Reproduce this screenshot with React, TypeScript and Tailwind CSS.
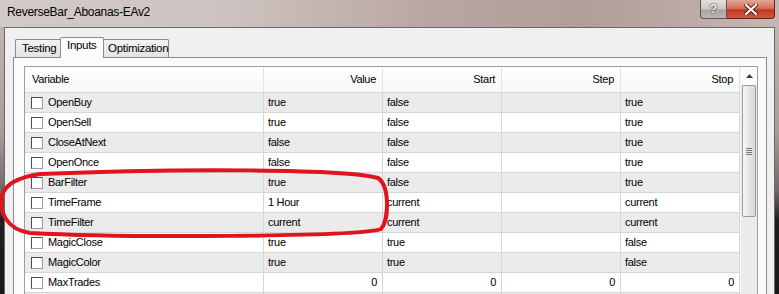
import React from "react";

type Row = { name: string; value: string; start: string; step: string; stop: string; num?: boolean };

const rows: Row[] = [
  { name: "OpenBuy", value: "true", start: "false", step: "", stop: "true" },
  { name: "OpenSell", value: "true", start: "false", step: "", stop: "true" },
  { name: "CloseAtNext", value: "false", start: "false", step: "", stop: "true" },
  { name: "OpenOnce", value: "false", start: "false", step: "", stop: "true" },
  { name: "BarFilter", value: "true", start: "false", step: "", stop: "true" },
  { name: "TimeFrame", value: "1 Hour", start: "current", step: "", stop: "current" },
  { name: "TimeFilter", value: "current", start: "current", step: "", stop: "current" },
  { name: "MagicClose", value: "true", start: "true", step: "", stop: "false" },
  { name: "MagicColor", value: "true", start: "true", step: "", stop: "false" },
  { name: "MaxTrades", value: "0", start: "0", step: "0", stop: "0", num: true },
  { name: "", value: "", start: "", step: "", stop: "" },
];

const Cell: React.FC<{ text: string; num?: boolean }> = ({ text, num }) => (
  <div
    className={`w-[119px] shrink-0 h-full border-r border-[#d6d6d6] flex items-center ${
      num ? "justify-end pr-[5px]" : "pl-[4px]"
    }`}
  >
    {text}
  </div>
);

const HeadCell: React.FC<{ text: string }> = ({ text }) => (
  <div className="w-[119px] shrink-0 h-full border-r border-[#e3e3e3] flex items-center justify-end pr-[6px]">
    {text}
  </div>
);

const App: React.FC = () => {
  return (
    <div
      className="relative w-[779px] h-[294px] overflow-hidden bg-[linear-gradient(180deg,#c8bbb7_0%,#a89c98_45%,#6e6866_65%,#1e1e1e_75%,#151a15_100%)]"
      style={{ fontFamily: '"Liberation Sans", Arial, sans-serif' }}
    >
      {/* title bar */}
      <div className="h-[27px] flex justify-between bg-[linear-gradient(90deg,#d3cbc8_0%,#cdc2bf_30%,#b9a6a2_55%,#b39d98_75%,#c6b6b2_100%)]">
        <div className="pl-[7px] pt-[6px] text-[12px] tracking-[-0.3px] text-black leading-none">
          ReverseBar_Aboanas-EAv2
        </div>
        <div className="flex pr-[4px] h-[19px]">
          <div className="w-[27px] h-full border border-[#5b5655] border-t-0 rounded-bl-[4px] bg-[linear-gradient(180deg,#e4dedc_0%,#cdc5c3_50%,#aaa2a0_55%,#bdb6b4_100%)] flex items-center justify-center text-[13px] font-bold text-[#f4f4f4] [text-shadow:0_0_2px_#333,0_0_1px_#333]">
            ?
          </div>
          <div className="w-[48px] h-full border border-[#5b2a22] border-t-0 border-l-0 rounded-br-[4px] bg-[linear-gradient(180deg,#e3a495_0%,#d6735c_45%,#c0391f_55%,#d5543a_100%)] flex items-center justify-center">
            <svg width="14" height="11" viewBox="0 0 14 11">
              <path d="M2 1 L12 10 M12 1 L2 10" stroke="#4a1a12" strokeWidth="4" strokeLinecap="square" />
              <path d="M2 1 L12 10 M12 1 L2 10" stroke="#ffffff" strokeWidth="2.2" strokeLinecap="square" />
            </svg>
          </div>
        </div>
      </div>

      {/* window body */}
      <div className="ml-[4px] w-[771px] h-[400px] border border-[#6a6a6a] bg-[#f0f0f0] pt-[8px]">
        {/* tabs */}
        <div className="flex items-end h-[21px] pl-[10px] text-[11.5px] tracking-[-0.3px] text-black">
          <div className="h-[18px] px-[6px] border border-[#898c95] border-b-0 border-r-0 rounded-tl-[2px] bg-[linear-gradient(180deg,#f3f3f3,#e3e3e3)] flex items-center w-[45px]">
            Testing
          </div>
          <div className="relative z-10 h-[21px] w-[44px] px-[6px] border border-[#898c95] border-b-0 rounded-t-[2px] bg-[#fcfcfc] -mb-px pb-[4px] flex items-center">
            Inputs
          </div>
          <div className="h-[18px] w-[65px] px-[4px] border border-[#898c95] border-b-0 border-l-0 rounded-tr-[2px] bg-[linear-gradient(180deg,#f3f3f3,#e3e3e3)] flex items-center">
            Optimization
          </div>
        </div>

        {/* tab panel */}
        <div className="ml-[8px] w-[754px] h-[360px] border border-[#898c95] bg-[#fbfbfb] pt-[8px] pl-[10px]">
          {/* grid */}
          <div className="w-[734px] border border-[#9a9ea6] bg-white flex text-[11px] tracking-[-0.3px] text-black">
            <div className="w-[715px]">
              <div className="h-[26px] flex border-b border-[#d6d6d6] bg-[linear-gradient(180deg,#ffffff,#f6f7f8)]">
                <div className="w-[239px] shrink-0 h-full border-r border-[#e3e3e3] flex items-center pl-[7px]">
                  Variable
                </div>
                <HeadCell text="Value" />
                <HeadCell text="Start" />
                <HeadCell text="Step" />
                <HeadCell text="Stop" />
              </div>
              {rows.map((r, i) => (
                <div
                  key={i}
                  className={`h-[20px] flex border-b border-[#d6d6d6] ${i % 2 === 0 ? "bg-[#ebebeb]" : "bg-white"}`}
                >
                  <div className="w-[239px] shrink-0 h-full border-r border-[#d6d6d6] flex items-center pl-[6px] gap-[5px]">
                    <div className="w-[12px] h-[12px] border border-[#4a4a4a] border-r-[#9a9a9a] border-b-[#9a9a9a] bg-white" />
                    {r.name}
                  </div>
                  <Cell text={r.value} num={r.num} />
                  <Cell text={r.start} num={r.num} />
                  <Cell text={r.step} num={r.num} />
                  <Cell text={r.stop} num={r.num} />
                </div>
              ))}
            </div>

            {/* scrollbar */}
            <div className="w-[17px] bg-[#ebebeb] border-l border-[#f4f4f4] flex flex-col items-center">
              <div className="h-[18px] w-full bg-[#fbfbfb] flex items-center justify-center">
                <svg width="7" height="4" viewBox="0 0 7 4">
                  <path d="M0 4 L3.5 0 L7 4 Z" fill="#404040" />
                </svg>
              </div>
              <div className="w-[14px] h-[132px] mt-[0px] rounded-[2px] border border-[#9a9a9a] bg-[linear-gradient(90deg,#f8f8f8,#e6e6e6_50%,#d8d8d8)] flex items-center justify-center">
                <div className="flex flex-col gap-[1px]">
                  <div className="w-[6px] h-px bg-[#7a7a7a]" />
                  <div className="w-[6px] h-px bg-[#7a7a7a]" />
                  <div className="w-[6px] h-px bg-[#7a7a7a]" />
                  <div className="w-[6px] h-px bg-[#7a7a7a]" />
                </div>
              </div>
            </div>
          </div>
        </div>
      </div>

      {/* red hand-drawn annotation */}
      <svg className="absolute left-0 top-0 pointer-events-none" width="779" height="294" viewBox="0 0 779 294">
        <path
          d="M40 174 C 180 168, 350 169, 378 178 C 390 186, 389 220, 381 229 C 360 237, 120 238, 30 233 C 6 229, -1 212, 2 196 C 5 183, 20 177, 40 174 Z"
          fill="none"
          stroke="#e0141c"
          strokeWidth="4"
        />
      </svg>
    </div>
  );
};

export default App;
